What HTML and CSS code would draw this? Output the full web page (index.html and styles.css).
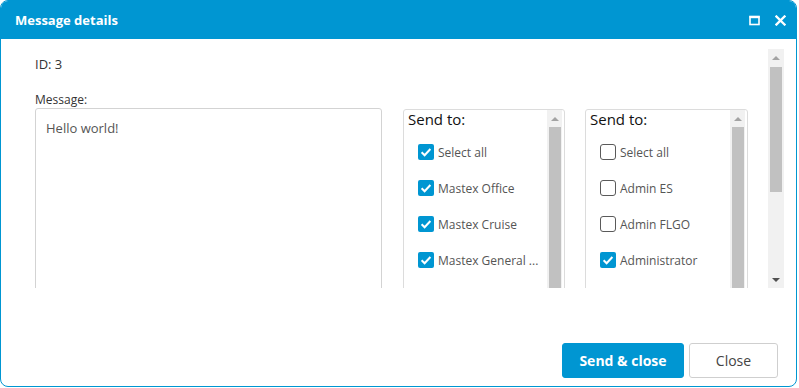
FILE: index.html
```html
<!DOCTYPE html>
<html lang="en">
<head>
    <meta charset="UTF-8">
    <title>Message details</title>
    <link rel="stylesheet" href="styles.css">
</head>
<body>
    <div class="dialog">
        <div class="titlebar">
            <span class="title">Message details</span>
            <div class="tools">
                <svg class="tool" width="11" height="11" viewBox="0 0 11 11">
                    <rect x="1" y="1.5" width="9" height="8" fill="none" stroke="#fff" stroke-width="1.6"/>
                    <rect x="0.5" y="1" width="10" height="2.2" fill="#fff"/>
                </svg>
                <svg class="tool" width="11" height="11" viewBox="0 0 11 11">
                    <path d="M1.5 1.5 L9.5 9.5 M9.5 1.5 L1.5 9.5" stroke="#fff" stroke-width="2.3" stroke-linecap="square"/>
                </svg>
            </div>
        </div>

        <div class="body">
            <div class="pane">
                <div class="idLine">ID: 3</div>
                <div class="label">Message:</div>
                <div class="fields">
                    <div class="textBox">Hello world!</div>

                    <div class="listBox first">
                        <div class="listBody">
                            <div class="listTitle">Send to:</div>
                            <div class="item"><span class="check on"><svg width="16" height="16" viewBox="0 0 16 16"><polyline points="3.6,8.3 6.6,11.2 12.4,5" fill="none" stroke="#fff" stroke-width="2"/></svg></span>Select all</div>
                            <div class="item"><span class="check on"><svg width="16" height="16" viewBox="0 0 16 16"><polyline points="3.6,8.3 6.6,11.2 12.4,5" fill="none" stroke="#fff" stroke-width="2"/></svg></span>Mastex Office</div>
                            <div class="item"><span class="check on"><svg width="16" height="16" viewBox="0 0 16 16"><polyline points="3.6,8.3 6.6,11.2 12.4,5" fill="none" stroke="#fff" stroke-width="2"/></svg></span>Mastex Cruise</div>
                            <div class="item"><span class="check on"><svg width="16" height="16" viewBox="0 0 16 16"><polyline points="3.6,8.3 6.6,11.2 12.4,5" fill="none" stroke="#fff" stroke-width="2"/></svg></span>Mastex General ...</div>
                        </div>
                        <div class="miniScroll">
                            <div class="arrowUp"></div>
                            <div class="miniThumb"></div>
                        </div>
                    </div>

                    <div class="listBox second">
                        <div class="listBody">
                            <div class="listTitle">Send to:</div>
                            <div class="item"><span class="check"></span>Select all</div>
                            <div class="item"><span class="check"></span>Admin ES</div>
                            <div class="item"><span class="check"></span>Admin FLGO</div>
                            <div class="item"><span class="check on"><svg width="16" height="16" viewBox="0 0 16 16"><polyline points="3.6,8.3 6.6,11.2 12.4,5" fill="none" stroke="#fff" stroke-width="2"/></svg></span>Administrator</div>
                        </div>
                        <div class="miniScroll">
                            <div class="arrowUp"></div>
                            <div class="miniThumb"></div>
                        </div>
                    </div>
                </div>
            </div>

            <!-- outer scrollbar -->
            <div class="vScroll">
                <div class="arrowUp big"></div>
                <div class="thumb"></div>
                <div class="spacer"></div>
                <div class="arrowDown"></div>
            </div>
        </div>

        <div class="footer">
            <button class="btn primary">Send &amp; close</button>
            <button class="btn">Close</button>
        </div>
    </div>
</body>
</html>
```

FILE: styles.css
```css
*{
    margin: 0;
    box-sizing: border-box;
    font-family: 'Open Sans', sans-serif;
}

body{
    background: #fff;
}

.dialog{
    width: 797px;
    height: 387px;
    border: 1px solid #0096d2;
    border-radius: 8px;
    overflow: hidden;
    display: flex;
    flex-direction: column;
    background: #fff;
}

.titlebar{
    height: 38px;
    flex: none;
    background: #0096d2;
    display: flex;
    align-items: center;
    justify-content: space-between;
    padding: 0 10px 0 14px;
}

.title{
    color: #fff;
    font-size: 13px;
    font-weight: 700;
}

.tools{
    display: flex;
    gap: 15px;
    padding-top: 1px;
}

.tool{
    display: block;
}

/* content area */
.body{
    flex: none;
    height: 249px;
    padding: 10px 12px 0 0;
    display: flex;
}

.pane{
    flex: 1;
    overflow: hidden;
    padding: 6px 0 0 34px;
    color: #333;
}

.idLine{
    font-size: 13px;
    line-height: 18px;
}

.label{
    font-size: 12px;
    line-height: 16px;
    margin-top: 19px;
}

.fields{
    display: flex;
    align-items: flex-start;
}

.textBox{
    width: 347px;
    height: 220px;
    flex: none;
    border: 1px solid #d3d3d3;
    border-radius: 3px;
    padding: 10px 10px;
    font-size: 13px;
    line-height: 18px;
    color: #555;
}

.listBox{
    flex: none;
    height: 220px;
    margin-top: 1px;
    border: 1px solid #dcdcdc;
    border-radius: 3px;
    display: flex;
}

.first{
    width: 162px;
    margin-left: 21px;
}

.second{
    width: 163px;
    margin-left: 20px;
}

.listBody{
    flex: 1;
    overflow: hidden;
    padding: 0 0 0 3px;
}

.listTitle{
    font-size: 15px;
    line-height: 19px;
    padding-left: 1px;
    color: #111;
    font-weight: 500;
}

.item{
    display: flex;
    align-items: center;
    height: 36px;
    padding-left: 11px;
    font-size: 12px;
    color: #555;
    white-space: nowrap;
}

.listTitle + .item{
    margin-top: 5px;
}

.check{
    width: 16px;
    height: 16px;
    flex: none;
    margin-right: 4px;
    border: 1px solid #5a5a5a;
    border-radius: 3px;
    background: #fff;
}

.check.on{
    border: none;
    background: #0096d2;
    border-radius: 2px;
}

.check svg{
    display: block;
}

/* scrollbars */
.miniScroll{
    width: 15px;
    flex: none;
    margin: 0 2px 0 0;
    background: #f1f1f1;
    display: flex;
    flex-direction: column;
}

.arrowUp, .arrowDown{
    height: 17px;
    flex: none;
    display: flex;
    align-items: center;
    justify-content: center;
}

.arrowUp::after{
    content: "";
    border-left: 4px solid transparent;
    border-right: 4px solid transparent;
    border-bottom: 4px solid #a3a3a3;
}

.arrowDown::after{
    content: "";
    border-left: 4px solid transparent;
    border-right: 4px solid transparent;
    border-top: 4px solid #505050;
}

.miniThumb{
    flex: 1;
    margin: 0 1px 0 2px;
    background: #c1c1c1;
}

.vScroll{
    width: 16px;
    height: 239px;
    flex: none;
    background: #f1f1f1;
    display: flex;
    flex-direction: column;
}

.thumb{
    height: 125px;
    margin: 1px 2px 0 2px;
    background: #c1c1c1;
}

.spacer{
    flex: 1;
}

/* footer buttons */
.footer{
    flex: 1;
    display: flex;
    justify-content: flex-end;
    align-items: flex-end;
    gap: 5px;
    padding: 0 18px 8px 0;
}

.btn{
    height: 35px;
    border: 1px solid #cfcfcf;
    border-radius: 3px;
    background: #fff;
    color: #444;
    font-size: 14px;
    width: 89px;
}

.btn.primary{
    width: 122px;
    background: #0096d2;
    border-color: #0096d2;
    color: #fff;
    font-weight: 700;
}
```
